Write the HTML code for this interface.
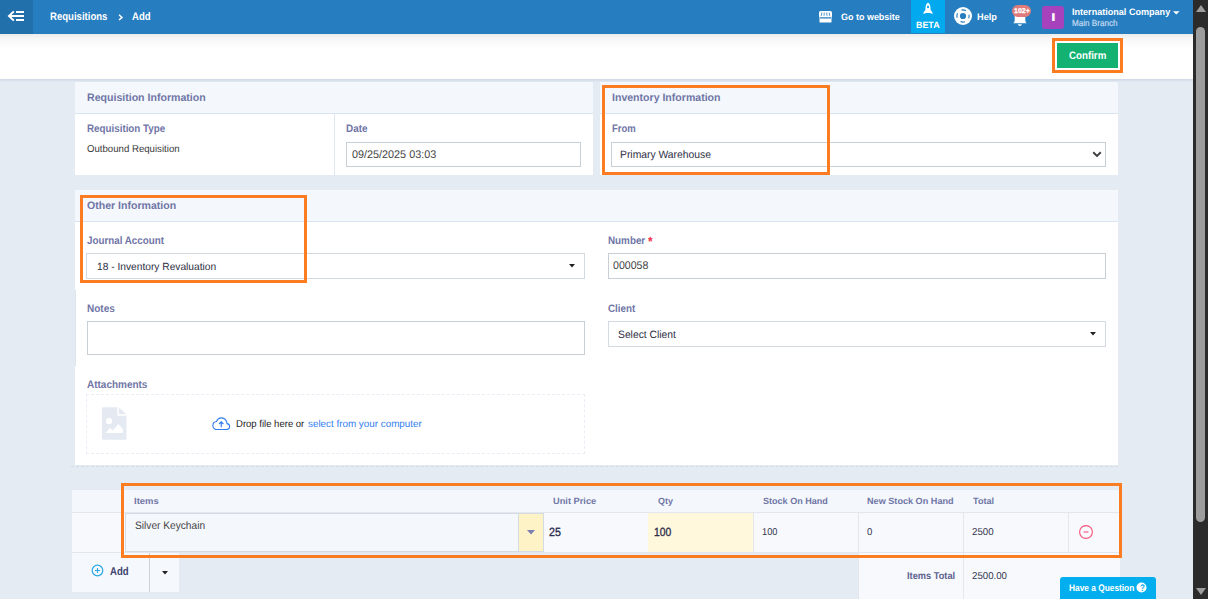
<!DOCTYPE html>
<html lang="en"><head><meta charset="utf-8"><title>Requisitions - Add</title>
<style>
*{box-sizing:border-box}
html,body{margin:0;padding:0}
body{width:1208px;height:599px;overflow:hidden;position:relative;background:#e4ebf3;font-family:"Liberation Sans",Arial,sans-serif}
.abs,.t,#page *{position:absolute}
#page{position:absolute;left:0;top:0;width:1193px;height:599px;overflow:hidden}
.t{white-space:pre;line-height:20px;text-rendering:geometricPrecision;transform-origin:0 0;margin:0;padding:0}
#texts{position:absolute;left:0;top:0;width:1193px;height:599px;overflow:hidden}
header{left:0;top:0;width:1193px;height:34px;background:#267dbf}
.menu{left:0;top:0;width:33px;height:34px;background:#2170ab}
.beta{left:911px;top:0;width:34px;height:33px;background:#03a9ee}
.avatar{left:1042px;top:6px;width:22px;height:23px;border-radius:3px;background:#a742bd}
.badge{left:1012px;top:5px;width:19px;height:12px;border-radius:6px;background:#df7b7b}
.toolbar{left:0;top:34px;width:1193px;height:45px;background:linear-gradient(#ececec 0,#f5f5f5 4px,#fbfbfb 9px,#fff 16px,#fff 100%);box-shadow:0 1px 3px rgba(120,140,170,.27)}
.hl{border:3px solid #fc7d21}
.btn-confirm{left:1057px;top:43px;width:61px;height:25px;background:#13b272}
.panel{background:#fff}
.phead{left:0;top:0;right:0;height:32px;background:#f4f8fc;border-bottom:1px solid #d9e4f1}
.inp{background:#fff;border:1px solid #c9cfd6}
.scroll{position:absolute;left:1193px;top:0;width:15px;height:599px;background:#2b2b2b}
.scroll i{position:absolute;display:block}
.thumb{left:3px;top:27px;width:9px;height:495px;border-radius:4.5px;background:#9d9d9d}
table,td{position:static}

</style></head>
<body>
<div id="page">
<header>
  <div class="menu">
    <svg style="left:7px;top:10px" width="18" height="12" viewBox="0 0 18 12"><g fill="none" stroke="#fff" stroke-width="2"><path d="M9 2H17M3 6H17M9 10H17"/><path d="M6.800 1.400L2 6L6.800 10.600" stroke-linejoin="miter"/></g></svg>
  </div>
  <svg style="left:117.500px;top:13.500px" width="6" height="7" viewBox="0 0 6 7"><path d="M1 0.800L4 3.400L1 6" fill="none" stroke="#fff" stroke-width="1.500"/></svg>
  <!-- store icon -->
  <svg style="left:819px;top:10.500px" width="13" height="12" viewBox="0 0 13 12"><rect x="0" y="0" width="13" height="6.300" rx="1.600" fill="#fff"/><path d="M2.800 1.600L2.300 4.800M5.300 1.600L5 4.800M7.700 1.600L8 4.800M10.200 1.600L10.700 4.800" stroke="#267dbf" stroke-width="0.800"/><rect x="0.500" y="7.400" width="12" height="4" rx="0.500" fill="#fff"/><path d="M0.500 6.300V7.400M12.500 6.300V7.400" stroke="#fff" stroke-width="1"/></svg>
  <div class="beta">
    <svg style="left:11px;top:2px" width="12" height="14" viewBox="0 0 12 14"><path d="M6 0.5C8 2 8.8 4.5 8.6 8L10.5 10.5V12L8 11H4L1.5 12V10.5L3.4 8C3.2 4.5 4 2 6 0.5Z" fill="#fff"/><circle cx="6" cy="5" r="1.2" fill="#03a9ee"/></svg>
  </div>
  <!-- help -->
  <svg style="left:952.600px;top:6.100px" width="20" height="20" viewBox="0 0 20 20"><circle cx="10" cy="10" r="9" fill="#fff"/><circle cx="10" cy="10" r="3.100" fill="#267dbf"/><circle cx="10" cy="10" r="6.100" fill="none" stroke="#267dbf" stroke-width="1.100" stroke-dasharray="4.680 4.900" stroke-dashoffset="2.340"/></svg>
  <!-- bell -->
  <svg style="left:1012px;top:10px" width="16" height="17" viewBox="0 0 16 17"><path d="M2.700 12.200V5.500C2.700 2.500 5 0.500 7.850 0.500C10.700 0.500 13.300 2.500 13.300 5.500V12.200Z" fill="#fff"/><path d="M1.100 13.300Q2.700 12.600 2.700 11H13.300Q13.300 12.600 14.700 13.300Z" fill="#fff"/><path d="M5.800 14.200H9.900Q9.400 15.900 7.850 15.900Q6.300 15.900 5.800 14.200Z" fill="#fff"/></svg>
  <div class="badge"></div>
  <div class="avatar"></div>
  <svg style="left:1172.500px;top:11px" width="7" height="4" viewBox="0 0 7 4"><path d="M0 0.300H6.600L3.300 3.600Z" fill="#fff"/></svg>
</header>

<div class="toolbar"></div>
<div class="hl" style="left:1052px;top:38px;width:71px;height:35px;background:#fff"></div>
<div class="btn-confirm"></div>

<!-- Panel 1 -->
<section class="panel" style="left:75px;top:82px;width:518px;height:93px">
  <div class="phead"></div>
  <div style="left:259px;top:32px;width:1px;height:61px;background:#dfe7f1"></div>
  <div class="inp" style="left:271px;top:60px;width:235px;height:25px"></div>
</section>

<!-- Panel 2 -->
<section class="panel" style="left:600px;top:82px;width:518px;height:93px">
  <div class="phead"></div>
  <div class="inp" style="left:11px;top:60px;width:495px;height:25px"></div>
  <svg style="left:492px;top:69px" width="10" height="7" viewBox="0 0 10 7"><path d="M1.200 1.300L5 5L8.800 1.300" fill="none" stroke="#3a3d42" stroke-width="1.900"/></svg>
</section>
<div class="hl" style="left:602px;top:85px;width:228px;height:90px"></div>

<!-- Panel 3 -->
<section class="panel" style="left:75px;top:190px;width:1043px;height:275px">
  <div class="phead" style="height:32px"></div>
  <div class="inp" style="left:11px;top:63px;width:499px;height:26px;border-color:#d3dae3"></div>
  <svg style="left:494px;top:74px" width="6" height="4" viewBox="0 0 6 4"><path d="M0 0H6L3 3.6Z" fill="#222"/></svg>
  <div class="inp" style="left:533px;top:63px;width:498px;height:26px"></div>
  <div class="inp" style="left:12px;top:131px;width:498px;height:34px"></div>
  <div class="inp" style="left:533px;top:131px;width:498px;height:26px;border-color:#d3dae3"></div>
  <svg style="left:1015px;top:142px" width="6" height="4" viewBox="0 0 6 4"><path d="M0 0H6L3 3.6Z" fill="#222"/></svg>
  <div style="left:11px;top:204px;width:499px;height:60px;border:1px dashed #e9edf5"></div>
  <!-- file icon -->
  <svg style="left:27px;top:217px" width="25" height="33" viewBox="0 0 26 34"><path d="M1.5 0H16V9H25.5V32.5Q25.5 34 24 34H1.5Q0 34 0 32.5V1.5Q0 0 1.5 0Z" fill="#e4e9f2"/><path d="M17.5 0L25.5 7.5H17.5Z" fill="#e4e9f2"/><circle cx="7.400" cy="14.500" r="3.300" fill="#fff"/><path d="M3.800 27L8.500 21.500L11 24.300L17 17.500L21.700 22.800V27Z" fill="#fff"/></svg>
  <!-- cloud icon -->
  <svg style="left:137px;top:226.500px" width="18.500" height="13.500" viewBox="0 0 20 15"><path d="M5 14H15.500C17.800 14 19.300 12.500 19.300 10.600C19.300 8.800 18 7.500 16.400 7.300C16.300 3.900 13.800 1 10.400 1C7.600 1 5.600 2.700 4.800 5C2.400 5.200 0.700 7.100 0.700 9.500C0.700 12 2.600 14 5 14Z" fill="none" stroke="#2f7bf0" stroke-width="1.250"/><path d="M10 11.500V5.500M7.600 7.800L10 5.400L12.400 7.800" fill="none" stroke="#2f7bf0" stroke-width="1.250"/></svg>
</section>
<div class="hl" style="left:80px;top:195px;width:227px;height:88px"></div>
<div style="left:75px;top:290px;width:1px;height:76px;background:#dde4ed"></div>
<div style="left:71px;top:466px;width:1047px;height:0;border-top:1px dashed #d3dbe6"></div>

<!-- Items table -->
<section style="left:72px;top:490px;width:1048px;height:110px">
  <div style="left:0;top:0;width:1048px;height:23px;background:#f4f8fc;border-bottom:1px solid #e3e6ec"></div>
  <div style="left:0;top:23px;width:1048px;height:40px;background:#f7f9fc;border-bottom:1px solid #e3e6ec"></div>
  <div class="inp" style="left:53px;top:23px;width:394px;height:39px;background:#f4f8fc;border-color:#d5dbe2"></div>
  <div style="left:446px;top:23px;width:26px;height:39px;background:#fdf3c6;border:1px solid #d5dbe2"></div>
  <svg style="left:455px;top:40px" width="8" height="5" viewBox="0 0 8 5"><path d="M0 0H8L4 4.600Z" fill="#7b7fb0"/></svg>
  <div style="left:576px;top:23px;width:105px;height:39px;background:#fff8dc"></div>
  <div style="left:786px;top:63px;width:262px;height:47px;background:#f7f9fc"></div>
  <div style="left:681px;top:23px;width:1px;height:39px;background:#e3e6ec"></div>
  <div style="left:786px;top:23px;width:1px;height:87px;background:#e3e6ec"></div>
  <div style="left:891px;top:23px;width:1px;height:87px;background:#e3e6ec"></div>
  <div style="left:996px;top:23px;width:1px;height:39px;background:#e3e6ec"></div>
  <svg style="left:1006px;top:34px" width="16" height="16" viewBox="0 0 16 16"><circle cx="8" cy="8" r="6.400" fill="none" stroke="#f9527a" stroke-width="1.100"/><path d="M5.600 8H10.400" stroke="#f9527a" stroke-width="1.100"/></svg>
  <div style="left:0;top:63px;width:107px;height:39px;background:#f5f8fc"></div>
  <div style="left:77px;top:63px;width:1px;height:39px;background:#ccd2da"></div>
  <svg style="left:19px;top:74px" width="13" height="13" viewBox="0 0 13 13"><circle cx="6.500" cy="6.500" r="5.300" fill="none" stroke="#29a9e6" stroke-width="1.200"/><path d="M6.500 4V9M4 6.500H9" stroke="#29a9e6" stroke-width="1.100"/></svg>
  <svg style="left:90px;top:81px" width="6" height="4" viewBox="0 0 6 4"><path d="M0 0H6L3 3.600Z" fill="#222"/></svg>
</section>
<div class="hl" style="left:121px;top:483px;width:1001px;height:75px"></div>

<div style="left:1060px;top:577px;width:96px;height:24px;background:#02aeee;border-radius:3px 3px 0 0"></div>
<svg style="left:1136px;top:582px" width="11" height="11" viewBox="0 0 11 11"><circle cx="5.500" cy="5.500" r="5" fill="#fff"/></svg>
</div>
<div class="scroll">
  <i style="left:2.500px;top:4.500px;width:0;height:0;border-left:5px solid transparent;border-right:5px solid transparent;border-bottom:7.500px solid #9d9d9d"></i>
  <i class="thumb"></i>
  <i style="left:2.500px;top:588px;width:0;height:0;border-left:5px solid transparent;border-right:5px solid transparent;border-top:7.500px solid #9d9d9d"></i>
</div>

<div id="texts">
<span class="t" style="left:50.4px;top:7px;font-size:11.0px;font-weight:700;color:#fff;transform:scaleX(0.8695);">Requisitions</span>
<span class="t" style="left:132.2px;top:7px;font-size:11.0px;font-weight:700;color:#fff;transform:scaleX(0.8695);">Add</span>
<span class="t" style="left:840.6px;top:7px;font-size:9.3px;font-weight:700;color:#fff;transform:scaleX(0.9647);">Go to website</span>
<span class="t" style="left:916.2px;top:15px;font-size:9.0px;font-weight:700;color:#fff;transform:scaleX(0.9898);">BETA</span>
<span class="t" style="left:977.0px;top:7px;font-size:9.4px;font-weight:700;color:#fff;transform:scaleX(0.9789);">Help</span>
<span class="t" style="left:1071.5px;top:2px;font-size:9.4px;font-weight:700;color:#fff;transform:scaleX(0.9667);">International Company</span>
<span class="t" style="left:1071.5px;top:13px;font-size:8.8px;font-weight:400;color:#c2dbf0;transform:scaleX(0.9212);-webkit-text-stroke:0.2px #c2dbf0;">Main Branch</span>
<span class="t" style="left:1069.0px;top:46px;font-size:10.9px;font-weight:700;color:#fff;transform:scaleX(0.8934);">Confirm</span>
<span class="t" style="left:86.6px;top:88px;font-size:10.8px;font-weight:700;color:#7075a6;transform:scaleX(0.9796);">Requisition Information</span>
<span class="t" style="left:86.6px;top:119px;font-size:10.8px;font-weight:700;color:#7075a6;transform:scaleX(0.9073);">Requisition Type</span>
<span class="t" style="left:86.6px;top:140px;font-size:10.0px;font-weight:400;color:#3a3a3a;transform:scaleX(0.9627);">Outbound Requisition</span>
<span class="t" style="left:346.2px;top:119px;font-size:10.8px;font-weight:700;color:#7075a6;transform:scaleX(0.9186);">Date</span>
<span class="t" style="left:351.8px;top:145px;font-size:11.0px;font-weight:400;color:#444;transform:scaleX(0.9832);">09/25/2025 03:03</span>
<span class="t" style="left:611.9px;top:88px;font-size:10.8px;font-weight:700;color:#7075a6;transform:scaleX(0.9776);">Inventory Information</span>
<span class="t" style="left:611.9px;top:119px;font-size:10.8px;font-weight:700;color:#7075a6;transform:scaleX(0.8815);">From</span>
<span class="t" style="left:620.0px;top:145px;font-size:10.7px;font-weight:400;color:#2e2f45;transform:scaleX(0.9676);">Primary Warehouse</span>
<span class="t" style="left:86.8px;top:196px;font-size:10.8px;font-weight:700;color:#7075a6;transform:scaleX(0.9782);">Other Information</span>
<span class="t" style="left:86.8px;top:231px;font-size:10.8px;font-weight:700;color:#7075a6;transform:scaleX(0.9081);">Journal Account</span>
<span class="t" style="left:96.8px;top:258px;font-size:10.4px;font-weight:400;color:#2e2f45;transform:scaleX(0.9827);">18 - Inventory Revaluation</span>
<span class="t" style="left:607.9px;top:231px;font-size:10.8px;font-weight:700;color:#7075a6;transform:scaleX(0.9118);">Number</span>
<span class="t" style="left:648.2px;top:232px;font-size:13.5px;font-weight:700;color:#f0344e;transform:scaleX(0.8736);">*</span>
<span class="t" style="left:613.0px;top:256px;font-size:11.0px;font-weight:400;color:#444;transform:scaleX(0.9641);">000058</span>
<span class="t" style="left:607.9px;top:299px;font-size:10.8px;font-weight:700;color:#7075a6;transform:scaleX(0.9100);">Client</span>
<span class="t" style="left:617.8px;top:325px;font-size:10.6px;font-weight:400;color:#2e2f45;transform:scaleX(0.9734);">Select Client</span>
<span class="t" style="left:87.3px;top:299px;font-size:10.8px;font-weight:700;color:#7075a6;transform:scaleX(0.9267);">Notes</span>
<span class="t" style="left:86.6px;top:375px;font-size:10.8px;font-weight:700;color:#7075a6;transform:scaleX(0.9235);">Attachments</span>
<span class="t" style="left:236.3px;top:415px;font-size:10.0px;font-weight:400;color:#222;transform:scaleX(0.9525);">Drop file here or</span>
<span class="t" style="left:307.8px;top:415px;font-size:10.0px;font-weight:400;color:#3380ee;transform:scaleX(0.9843);">select from your computer</span>
<span class="t" style="left:133.6px;top:491px;font-size:9.0px;font-weight:700;color:#7075a6;transform:scaleX(1.0504);">Items</span>
<span class="t" style="left:552.8px;top:491px;font-size:9.0px;font-weight:700;color:#7075a6;transform:scaleX(1.0282);">Unit Price</span>
<span class="t" style="left:657.6px;top:491px;font-size:9.0px;font-weight:700;color:#7075a6;transform:scaleX(0.9923);">Qty</span>
<span class="t" style="left:762.8px;top:491px;font-size:9.0px;font-weight:700;color:#7075a6;transform:scaleX(1.0060);">Stock On Hand</span>
<span class="t" style="left:867.4px;top:491px;font-size:9.0px;font-weight:700;color:#7075a6;transform:scaleX(1.0127);">New Stock On Hand</span>
<span class="t" style="left:972.7px;top:491px;font-size:9.0px;font-weight:700;color:#7075a6;transform:scaleX(1.0123);">Total</span>
<span class="t" style="left:135.2px;top:516px;font-size:10.8px;font-weight:400;color:#444;transform:scaleX(0.9419);">Silver Keychain</span>
<span class="t" style="left:548.6px;top:522px;font-size:11.9px;font-weight:400;color:#2c2f4e;transform:scaleX(0.8992);-webkit-text-stroke:0.35px #2c2f4e;">25</span>
<span class="t" style="left:653.9px;top:522px;font-size:11.9px;font-weight:400;color:#2c2f4e;transform:scaleX(0.8668);-webkit-text-stroke:0.35px #2c2f4e;">100</span>
<span class="t" style="left:762.3px;top:523px;font-size:10.0px;font-weight:400;color:#33364f;transform:scaleX(0.9228);">100</span>
<span class="t" style="left:866.6px;top:523px;font-size:10.0px;font-weight:400;color:#33364f;transform:scaleX(0.9528);">0</span>
<span class="t" style="left:971.7px;top:523px;font-size:10.0px;font-weight:400;color:#33364f;transform:scaleX(0.9708);">2500</span>
<span class="t" style="left:906.9px;top:567px;font-size:10.0px;font-weight:700;color:#5d6290;transform:scaleX(0.9242);">Items Total</span>
<span class="t" style="left:971.7px;top:567px;font-size:10.0px;font-weight:400;color:#33364f;transform:scaleX(0.9680);">2500.00</span>
<span class="t" style="left:110.4px;top:562px;font-size:11.3px;font-weight:700;color:#3d416d;transform:scaleX(0.8467);">Add</span>
<span class="t" style="left:1068.7px;top:579px;font-size:9.5px;font-weight:700;color:#fff;transform:scaleX(0.8771);">Have a Question</span>
<span class="t" style="left:1014.0px;top:2px;font-size:7.0px;font-weight:700;color:#fff;transform:scaleX(1.0012);-webkit-text-stroke:0.3px #fff;">102+</span>
<span class="t" style="left:1139.6px;top:579px;font-size:9.5px;font-weight:700;color:#02aeee;transform:scaleX(0.8258);">?</span>
<span class="t" style="left:1050.8px;top:8px;font-size:11.3px;font-weight:700;color:#fff;transform:scaleX(1.4965);">I</span>
</div>
</body></html>
